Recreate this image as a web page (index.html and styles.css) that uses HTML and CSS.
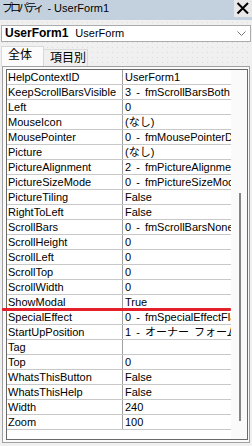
FILE: index.html
```html
<!DOCTYPE html>
<html lang="ja">
  <head>
    <meta charset="UTF-8" />
    <meta name="viewport" content="width=device-width, initial-scale=1.0" />
    <title>プロパティ - UserForm1</title>

    <link rel="stylesheet" href="styles.css">
  </head>

  <body>
    <header class="titlebar">
      <span class="title"><span class="kana">プロパティ</span> - UserForm1</span>
      <span class="close">
        <svg width="18" height="17" viewBox="0 0 18 17">
          <path d="M3.5 3 L14 13.5 M14 3 L3.5 13.5" stroke="#000" stroke-width="2" fill="none" />
        </svg>
      </span>
    </header>

    <div class="combo">
      <b>UserForm1</b>UserForm
      <svg class="chevron" width="9" height="5" viewBox="0 0 9 5">
        <path d="M0.5 0.5 L4.5 4.5 L8.5 0.5" stroke="#777" stroke-width="1" fill="none" />
      </svg>
    </div>

    <div class="tabs">
      <div class="tab tab-all">全体</div>
      <div class="tab tab-cat">項目別</div>
    </div>

    <div class="grid">
      <div class="grid-inner">
        <div class="rows">
          <div class="row"><div class="name">HelpContextID</div><div class="value">UserForm1</div></div>
          <div class="row"><div class="name">KeepScrollBarsVisible</div><div class="value">3 - fmScrollBarsBoth</div></div>
          <div class="row"><div class="name">Left</div><div class="value">0</div></div>
          <div class="row"><div class="name">MouseIcon</div><div class="value">(なし)</div></div>
          <div class="row"><div class="name">MousePointer</div><div class="value">0 - fmMousePointerDefault</div></div>
          <div class="row"><div class="name">Picture</div><div class="value">(なし)</div></div>
          <div class="row"><div class="name">PictureAlignment</div><div class="value">2 - fmPictureAlignmentCenter</div></div>
          <div class="row"><div class="name">PictureSizeMode</div><div class="value">0 - fmPictureSizeModeClip</div></div>
          <div class="row"><div class="name">PictureTiling</div><div class="value">False</div></div>
          <div class="row"><div class="name">RightToLeft</div><div class="value">False</div></div>
          <div class="row"><div class="name">ScrollBars</div><div class="value">0 - fmScrollBarsNone</div></div>
          <div class="row"><div class="name">ScrollHeight</div><div class="value">0</div></div>
          <div class="row"><div class="name">ScrollLeft</div><div class="value">0</div></div>
          <div class="row"><div class="name">ScrollTop</div><div class="value">0</div></div>
          <div class="row"><div class="name">ScrollWidth</div><div class="value">0</div></div>
          <div class="row"><div class="name">ShowModal</div><div class="value">True</div></div>
          <div class="row"><div class="name">SpecialEffect</div><div class="value">0 - fmSpecialEffectFlat</div></div>
          <div class="row"><div class="name">StartUpPosition</div><div class="value">1 - オーナー フォームの中央</div></div>
          <div class="row"><div class="name">Tag</div><div class="value"></div></div>
          <div class="row"><div class="name">Top</div><div class="value">0</div></div>
          <div class="row"><div class="name">WhatsThisButton</div><div class="value">False</div></div>
          <div class="row"><div class="name">WhatsThisHelp</div><div class="value">False</div></div>
          <div class="row"><div class="name">Width</div><div class="value">240</div></div>
          <div class="row"><div class="name">Zoom</div><div class="value">100</div></div>
        </div>
        <div class="scrollbar"><div class="thumb"></div></div>
      </div>
    </div>

    <!-- 赤線マーク -->
    <div class="mark"></div>
  </body>
</html>
```

FILE: styles.css
```css
body {
  margin: 0;
  width: 252px;
  height: 446px;
  overflow: hidden;
  position: relative;
  background-color: #f0f0f0;
  background-image: radial-gradient(circle, #dcdcdc 0.6px, transparent 0.8px);
  background-size: 5px 5px;
  font-family: "Liberation Sans", "Noto Sans CJK JP", sans-serif;
  font-size: 11px;
  color: #000;
}

.titlebar {
  display: flex;
  justify-content: space-between;
  height: 20px;
  background: #c3d1df;
}

.title {
  padding: 2px 0 0 2px;
  line-height: 13px;
}

.title .kana {
  letter-spacing: -3px;
  margin-right: 3px;
}

.close {
  width: 18px;
  height: 17px;
  background: #e8e8e8;
}

.close svg {
  display: block;
}

.combo {
  display: flex;
  align-items: center;
  height: 17px;
  margin: 5px 1px 0;
  box-sizing: border-box;
  border: 1px solid #acacac;
  background: #fff;
  padding: 0 4px 0 3px;
  line-height: 15px;
}

.combo b {
  font-size: 12px;
  margin-right: 7px;
}

.combo .chevron {
  margin-left: auto;
}

.tabs {
  display: flex;
  align-items: flex-end;
  height: 24px;
  padding-left: 1px;
}

.tab {
  box-sizing: border-box;
  border: 1px solid #d9d9d9;
  border-bottom: 0;
  font-family: "Noto Sans CJK JP", sans-serif;
  font-size: 12px;
  line-height: 14px;
}

.tab-all {
  width: 43px;
  height: 20px;
  padding-left: 6px;
  background: #fbfbfb;
}

.tab-cat {
  width: 44px;
  height: 17px;
  padding-left: 6px;
  border-left: 0;
  line-height: 13px;
  background: #f0f0f0;
}

.grid {
  height: 377px;
  margin: 0 2px;
  box-sizing: border-box;
  border: 1px solid #a0a0a0;
  padding: 2px 1px 2px 3px;
  background: #fafafa;
}

.grid-inner {
  display: flex;
  height: 100%;
  box-sizing: border-box;
  border: 1px solid #696969;
}

.rows {
  width: 224px;
  background: #fff;
}

.row {
  display: flex;
  height: 15px;
  box-sizing: border-box;
  border-bottom: 1px solid #c8c8c8;
  line-height: 14px;
  white-space: nowrap;
}

.name {
  width: 116px;
  box-sizing: border-box;
  border-right: 1px solid #a0a0a0;
  padding-left: 1px;
  overflow: hidden;
}

.value {
  flex: 1;
  padding-left: 2px;
  overflow: hidden;
  word-spacing: 2px;
}

.scrollbar {
  flex: 1;
  padding-left: 8px;
}

.thumb {
  width: 2px;
  height: 228px;
  margin-top: 123px;
  background: #858585;
}

.mark {
  position: absolute;
  left: 2px;
  top: 308px;
  width: 229px;
  height: 3px;
  border-radius: 1px;
  background: #e6202b;
}
```
